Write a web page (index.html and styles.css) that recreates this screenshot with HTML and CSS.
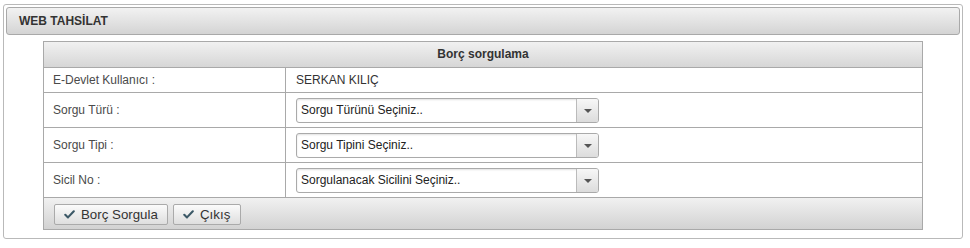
FILE: index.html
```html
<!DOCTYPE html>
<html lang="tr">
<head>
<meta charset="utf-8">
<title>Web Tahsilat</title>
<link rel="stylesheet" href="styles.css">
</head>
<body>
<div class="panel">
  <div class="panel-head">WEB TAHSİLAT</div>
  <div class="panel-body">
    <div class="form">
      <div class="form-title">Borç sorgulama</div>
      <div class="row short">
        <div class="lbl">E-Devlet Kullanıcı :</div>
        <div class="val">SERKAN KILIÇ</div>
      </div>
      <div class="row">
        <div class="lbl">Sorgu Türü :</div>
        <div class="val"><div class="select"><span class="sel-text">Sorgu Türünü Seçiniz..</span><span class="sel-btn"><span class="caret"></span></span></div></div>
      </div>
      <div class="row">
        <div class="lbl">Sorgu Tipi :</div>
        <div class="val"><div class="select"><span class="sel-text">Sorgu Tipini Seçiniz..</span><span class="sel-btn"><span class="caret"></span></span></div></div>
      </div>
      <div class="row">
        <div class="lbl">Sicil No :</div>
        <div class="val"><div class="select"><span class="sel-text">Sorgulanacak Sicilini Seçiniz..</span><span class="sel-btn"><span class="caret"></span></span></div></div>
      </div>
      <div class="form-foot">
        <button class="btn btn-wide"><svg class="chk" width="11" height="9" viewBox="0 0 11 9"><path d="M1.3 4.8 L4 7.4 L9.8 1.3" fill="none" stroke="#3b5866" stroke-width="2.1" stroke-linecap="round" stroke-linejoin="round"/></svg>Borç Sorgula</button>
        <button class="btn btn-narrow"><svg class="chk" width="11" height="9" viewBox="0 0 11 9"><path d="M1.3 4.8 L4 7.4 L9.8 1.3" fill="none" stroke="#3b5866" stroke-width="2.1" stroke-linecap="round" stroke-linejoin="round"/></svg>Çıkış</button>
      </div>
    </div>
  </div>
</div>
</body>
</html>
```

FILE: styles.css
```css
html, body {
  margin: 0;
  padding: 0;
  background: #ffffff;
}
body {
  font-family: "Liberation Sans", Arial, sans-serif;
  font-size: 12px;
  color: #333;
  padding: 4px 0 0 3px;
}
.panel {
  width: 960px;
  height: 235px;
  border: 1px solid #b9b9b9;
  border-radius: 3px;
  padding: 2px;
  box-sizing: border-box;
}
.panel-head {
  height: 28px;
  box-sizing: border-box;
  border: 1px solid #a9a9a9;
  border-radius: 3px;
  background: linear-gradient(#f2f2f2, #d4d4d4);
  font-weight: bold;
  color: #333;
  padding: 0 0 0 12px;
  line-height: 27px;
  font-size: 12px;
}
.panel-body {
  padding: 6px 0 0 37px;
}
.form {
  width: 880px;
  border: 1px solid #a9a9a9;
  box-sizing: border-box;
}
.form-title {
  height: 25px;
  line-height: 25px;
  text-align: center;
  font-weight: bold;
  color: #333;
  background: linear-gradient(#f1f1f1, #d6d6d6);
  border-bottom: 1px solid #a9a9a9;
}
.row {
  display: flex;
  height: 35px;
  border-bottom: 1px solid #a9a9a9;
  box-sizing: border-box;
}
.row.short {
  height: 25px;
}
.lbl {
  width: 242px;
  box-sizing: border-box;
  border-right: 1px solid #a9a9a9;
  padding-left: 9px;
  display: flex;
  align-items: center;
  color: #4a4a4a;
}
.val {
  flex: 1;
  padding-left: 10px;
  display: flex;
  align-items: center;
  color: #333;
}
.select {
  width: 303px;
  height: 25px;
  box-sizing: border-box;
  border: 1px solid #aaa;
  border-radius: 3px;
  display: flex;
  background: #fff;
  box-shadow: inset 0 1px 2px rgba(0,0,0,0.12);
}
.sel-text {
  flex: 1;
  padding-left: 4px;
  line-height: 22px;
  color: #222;
}
.sel-btn {
  width: 21px;
  border-left: 1px solid #bbb;
  background: linear-gradient(#f7f7f7, #dcdcdc);
  border-radius: 0 2px 2px 0;
  display: flex;
  align-items: center;
  justify-content: center;
}
.caret {
  width: 0;
  height: 0;
  border-left: 4px solid transparent;
  border-right: 4px solid transparent;
  border-top: 4px solid #555;
  margin-top: 1px;
}
.form-foot {
  height: 31px;
  background: linear-gradient(#f1f1f1, #d2d2d2);
  display: flex;
  align-items: center;
  gap: 5px;
  padding: 0 0 0 10px;
}
.btn {
  height: 21px;
  box-sizing: border-box;
  border: 1px solid #aaa;
  border-radius: 2px;
  background: linear-gradient(#fbfbfb, #dedede);
  font-family: "Liberation Sans", Arial, sans-serif;
  font-size: 13.3px;
  color: #333;
  display: flex;
  align-items: center;
  padding: 0 0 0 9px;
  margin: 0;
  margin-top: 2px;
}
.btn-wide { width: 114px; }
.btn-narrow { width: 68px; }
.chk {
  margin-right: 6px;
}
```
